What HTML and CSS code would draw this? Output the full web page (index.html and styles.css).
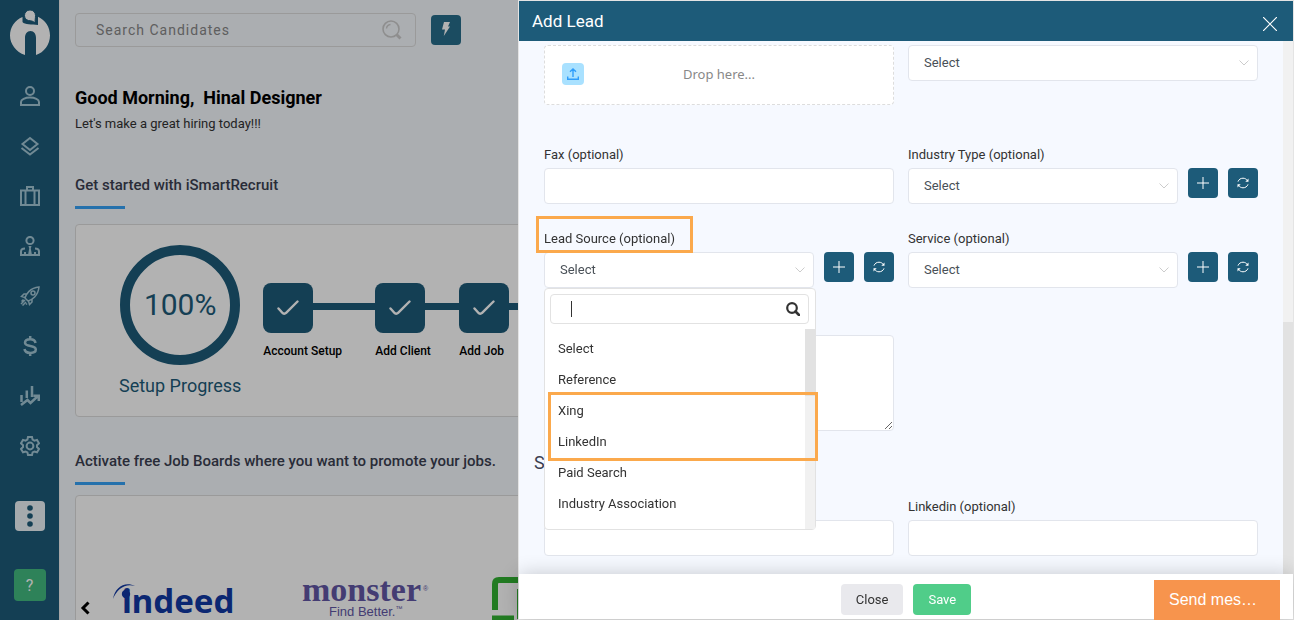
FILE: index.html
```html
<!DOCTYPE html>
<html lang="en">
<head>
  <meta charset="UTF-8">
  <title>Add Lead</title>
  <link rel="stylesheet" href="styles.css">
</head>
<body>
  <svg class="sprite" aria-hidden="true">
    <symbol id="plus" viewBox="0 0 12 12"><path d="M6 0v12M0 6h12" fill="none" stroke="currentColor"/></symbol>
    <symbol id="refresh" viewBox="0 0 12 12">
      <path d="M1 4.600C1.800 2.400 3.700 1.200 6 1.200c1.900 0 3.400.9 4.300 2.400M11 7.400c-.8 2.200-2.700 3.400-5 3.400-1.900 0-3.400-.9-4.300-2.400" fill="none" stroke="currentColor"/>
      <path d="M11.500 1.500v3.200H8.300zM.5 10.500V7.300h3.200z" fill="currentColor"/>
    </symbol>
    <symbol id="check" viewBox="0 0 22 16"><path d="M1.500 8.500l3.800 4.300c1 1.200 2.700 1.200 3.800.1L20.500 1.500" fill="none" stroke="currentColor" stroke-width="2.400" stroke-linecap="round"/></symbol>
  </svg>

  <div class="app">
    <nav class="sidebar">
      <a class="logo" href="#" aria-label="Home">
        <svg width="40" height="46" viewBox="0 0 40 46">
          <path d="M12.500 7C5 10 0 17 0 25.500 0 34 6 42 15 45V28c0-4 2-7 5.500-7s5.500 3 5.500 7v17c8-2.500 14-10.500 14-19.500C40 17 35.500 10 28 6.700V15c-6-1-13.500 0-15.500-3z" fill="#fff"/>
          <path d="M20 0c3.400 0 5.500 2.500 5.500 5.500 0 2.500-.5 4.500-.5 7.500-2-2.500-4.500-2-6.500-2.500-2.500-.6-4-2.500-4-5C14.500 2.500 16.600 0 20 0z" fill="#fff" stroke="#1d5b79"/>
        </svg>
      </a>
      <a href="#" aria-label="Candidates"><svg width="20" height="20" viewBox="0 0 20 20"><circle cx="10" cy="5" r="4" /><path d="M1 19v-3c0-2.500 4-4.500 9-4.500s9 2 9 4.500v3z"/></svg></a>
      <a href="#" aria-label="Jobs"><svg width="20" height="20" viewBox="0 0 20 20"><path d="M10 2l7.500 6L10 14 2.500 8zM1.500 12l8.500 6.500 8.500-6.500"/></svg></a>
      <a href="#" aria-label="Clients"><svg width="20" height="20" viewBox="0 0 20 20"><path d="M1 4.500h18V19H1zM7 4V1h6v3M5.500 5v14M14.500 5v14"/></svg></a>
      <a href="#" aria-label="Leads"><svg width="20" height="20" viewBox="0 0 20 20"><circle cx="10" cy="4.500" r="3.600"/><path d="M5 12.500c-3 0-4 1-4 3V19h18v-3.500c0-2-1-3-4-3M5 16v3M15 16v3"/><path d="M8.500 10h3l-.7 2.500 1 5.500H8.200l1-5.500z" class="solid"/></svg></a>
      <a href="#" aria-label="Campaigns"><svg width="20" height="20" viewBox="0 0 20 20"><path class="thin" d="M6.500 13.500L5 12c1-4 5-10 14-11-1 9-7 13-11 14zM7.500 8H4L1.500 10.500 5 11.500M12 12.500V16l-2.500 2.500-1-3.500M5 14l-4 4M3.500 13.500l-2 2M6 16l-3.500 3.500M7 17.500l-1 1"/><circle class="thin" cx="13" cy="7" r="2"/></svg></a>
      <a href="#" aria-label="Billing"><svg width="20" height="20" viewBox="0 0 20 20"><path class="thick" d="M15.500 7c-.3-2.400-2.300-3.700-5.200-3.700-3.200 0-5.300 1.300-5.300 3.500 0 2.300 2 2.700 5.300 3.200 3.500.5 5.500 1.300 5.500 3.500 0 2.100-2.200 3.400-5.500 3.400s-5.500-1.300-5.800-3.900M10.200 0v3M10.200 17v3"/></svg></a>
      <a href="#" aria-label="Reports"><svg width="20" height="20" viewBox="0 0 20 20"><path class="thick" d="M1.500 9v7M6.800 4.500v7.500M12 0v11M1 19l6.500-5 3 3L18 10M13.500 9.800h5.300V15"/></svg></a>
      <a href="#" aria-label="Settings"><svg width="20" height="20" viewBox="0 0 20 20"><path d="M8 1h4l.6 2.700 1.800 1 2.600-.8 2 3.400-2 1.900v1.800l2 1.900-2 3.400-2.600-.8-1.800 1L12 19H8l-.6-2.500-1.800-1-2.600.8-2-3.400L3 11V9.200L1 7.300l2-3.400 2.600.8 1.800-1z"/><circle cx="10" cy="10" r="3.400"/></svg></a>
      <button class="more" aria-label="More"><svg width="6" height="22" viewBox="0 0 6 22"><circle cx="3" cy="3" r="2.800"/><circle cx="3" cy="11" r="2.800"/><circle cx="3" cy="19" r="2.800"/></svg></button>
      <button class="help">?</button>
    </nav>

    <main class="main">
      <div class="topbar">
        <div class="search">
          <input type="text" placeholder="Search Candidates" aria-label="Search Candidates">
          <svg width="20" height="20" viewBox="0 0 20 20" fill="none" stroke="#ccc"><circle cx="9" cy="9" r="8" stroke-width="1.600"/><path d="M4.500 8.500A4.500 4.500 0 0 1 8.500 4.500" stroke-width="1.400"/><path d="M14.500 14.500l4 4" stroke-width="3"/></svg>
        </div>
        <button class="quick" aria-label="Quick actions"><svg width="8" height="14" viewBox="0 0 8 14"><path d="M2 0h6L6 4.500h2L1.800 14 3 7.500H0z" fill="#fff"/></svg></button>
      </div>

      <h1>Good Morning,&nbsp; Hinal Designer</h1>
      <p class="tagline">Let's make a great hiring today!!!</p>

      <h2>Get started with iSmartRecruit</h2>
      <section class="card setup">
        <div class="progress">
          <div class="ring">100%</div>
          <div>Setup Progress</div>
        </div>
        <ol class="steps">
          <li class="first"><div class="node"><span><svg width="22" height="16"><use href="#check"/></svg></span></div>Account Setup</li>
          <li><div class="node"><span><svg width="22" height="16"><use href="#check"/></svg></span></div>Add Client</li>
          <li><div class="node"><span><svg width="22" height="16"><use href="#check"/></svg></span></div>Add Job</li>
        </ol>
      </section>

      <h2>Activate free Job Boards where you want to promote your jobs.</h2>
      <section class="card boards">
        <button class="prev" aria-label="Previous"><svg width="10" height="14" viewBox="0 0 10 14"><path d="M8.500 1.500L3 7l5.500 5.500" fill="none" stroke="#000" stroke-width="3"/></svg></button>
        <svg width="128" height="60" viewBox="0 0 128 60" fill="#1039a4">
          <text x="9" y="36" class="indeed">indeed</text>
          <circle cx="13" cy="17" r="4.200"/>
          <path d="M0 22C2 10 12 4 22 9 12 6 4 12 0 22z"/>
        </svg>
        <svg width="131" height="60" viewBox="0 0 131 60" fill="#6257a5">
          <text x="1" y="24" class="monster">monster<tspan class="mark" dx="2" dy="-10">®</tspan></text>
          <text x="28" y="39" class="slogan">Find Better.<tspan class="mark" dy="-5">™</tspan></text>
        </svg>
        <svg width="60" height="60" viewBox="0 0 60 60" fill="none" stroke="#32b032" stroke-width="6"><path d="M3 33V7q0-4 4-4h50M0 41.500h22M28 12v30"/></svg>
      </section>
    </main>
  </div>

  <div class="backdrop"></div>

  <aside class="drawer">
    <header class="drawer-header">
      <span>Add Lead</span>
      <button aria-label="Close panel"><svg width="14" height="14" viewBox="0 0 14 14"><path d="M0 0l14 14M14 0L0 14" stroke="#fff" stroke-width="1.200"/></svg></button>
    </header>

    <div class="drawer-body">
      <form class="form">
        <div class="row">
          <button type="button" class="dropzone">
            <span class="upload"><svg width="12" height="12" viewBox="0 0 12 12" fill="none" stroke="#2e9dfb" stroke-width="1.400"><path d="M6 9V1M3 3.800L6 1l3 2.800M.7 8.500v2.800h10.600V8.500"/></svg></span>
            <span>Drop here...</span>
          </button>
          <select aria-label="Owner"><option>Select</option></select>
        </div>

        <div class="row after-drop">
          <div class="field">
            <label for="fax">Fax (optional)</label>
            <input id="fax" type="text">
          </div>
          <div class="field">
            <label for="industry">Industry Type (optional)</label>
            <div class="picker">
              <select id="industry"><option>Select</option></select>
              <button type="button" aria-label="Add industry"><svg width="12" height="12"><use href="#plus"/></svg></button>
              <button type="button" aria-label="Refresh industries"><svg width="12" height="12"><use href="#refresh"/></svg></button>
            </div>
          </div>
        </div>

        <div class="row">
          <div class="field lead-source">
            <label for="source" class="marked">Lead Source (optional)</label>
            <div class="picker">
              <select id="source"><option>Select</option></select>
              <button type="button" aria-label="Add source"><svg width="12" height="12"><use href="#plus"/></svg></button>
              <button type="button" aria-label="Refresh sources"><svg width="12" height="12"><use href="#refresh"/></svg></button>
            </div>
            <div class="menu">
              <div class="menu-search">
                <span class="caret"></span>
                <input type="text" aria-label="Filter sources">
                <svg width="14" height="14" viewBox="0 0 14 14" fill="none" stroke="#333"><circle cx="6" cy="6" r="4.800" stroke-width="2.200"/><path d="M9.500 9.500l3.500 3.500" stroke-width="2.600" stroke-linecap="round"/></svg>
              </div>
              <div class="menu-list">
                <ul role="listbox" aria-label="Lead Source">
                  <li role="option">Select</li>
                  <li role="option">Reference</li>
                  <li role="option">Xing</li>
                  <li role="option">LinkedIn</li>
                  <li role="option">Paid Search</li>
                  <li role="option">Industry Association</li>
                </ul>
                <div class="scrollbar"><div class="menu-thumb"></div></div>
              </div>
              <div class="menu-marker"></div>
            </div>
          </div>
          <div class="field">
            <label for="service">Service (optional)</label>
            <div class="picker">
              <select id="service"><option>Select</option></select>
              <button type="button" aria-label="Add service"><svg width="12" height="12"><use href="#plus"/></svg></button>
              <button type="button" aria-label="Refresh services"><svg width="12" height="12"><use href="#refresh"/></svg></button>
            </div>
          </div>
        </div>

        <div class="row notes">
          <textarea aria-label="Notes"></textarea>
        </div>

        <h3>Social</h3>
        <div class="row">
          <input type="text" aria-label="Skype">
          <div class="field">
            <label for="linkedin">Linkedin (optional)</label>
            <input id="linkedin" type="text">
          </div>
        </div>
      </form>
      <div class="scrollbar"><div class="body-thumb"></div></div>
    </div>

    <footer class="drawer-footer">
      <button class="btn-close">Close</button>
      <button class="btn-save">Save</button>
    </footer>
  </aside>

  <button class="chat">Send message</button>
</body>
</html>
```
FILE: styles.css
```css
* {
  box-sizing: border-box;
}
body {
  margin: 0;
  height: 100vh;
  overflow: hidden;
  font-family: Roboto, sans-serif;
  font-size: 13px;
  color: #333;
}
button, input, select, textarea {
  font: inherit;
  color: inherit;
}
button {
  border: 0;
  padding: 0;
  cursor: pointer;
}
ul, ol {
  list-style: none;
  margin: 0;
  padding: 0;
}
.sprite {
  display: none;
}

/* page behind the drawer */
.app {
  display: flex;
  height: 100vh;
  overflow: hidden;
}
.sidebar {
  flex: none;
  width: 60px;
  padding-top: 10px;
  display: flex;
  flex-direction: column;
  align-items: center;
  background: #1d5b79;
  border-right: 1px solid #eee;
}
.sidebar a {
  height: 20px;
  margin-bottom: 30px;
}
.sidebar .logo {
  height: 46px;
}
.sidebar a:not(.logo) svg {
  fill: none;
  stroke: #a3c6d5;
  stroke-width: 2;
}
.sidebar svg .thin {
  stroke-width: 1.5;
}
.sidebar svg .thick {
  stroke-width: 2.5;
}
.sidebar svg .solid {
  fill: #a3c6d5;
  stroke: none;
}
.more {
  width: 30px;
  height: 30px;
  margin-top: 15px;
  border-radius: 4px;
  background: #edf4f8;
}
.more svg {
  display: block;
  margin: auto;
  fill: #1d5b79;
}
.help {
  width: 32px;
  height: 32px;
  margin-top: 38px;
  border-radius: 4px;
  background: #43bb80;
  color: #fff;
  font-size: 16px;
}
.main {
  flex: 1;
  padding: 13px 15px 0;
  background: #f5f9fe;
}
.topbar {
  display: flex;
  align-items: center;
  gap: 15px;
  margin-bottom: 39px;
}
.search {
  display: flex;
  align-items: center;
  width: 341px;
  height: 34px;
  padding: 0 13px 0 20px;
  border: 1px solid #ddd;
  border-radius: 4px;
}
.search input {
  flex: 1;
  border: 0;
  padding: 0;
  background: none;
  font-size: 14px;
  letter-spacing: 1px;
}
.search input::placeholder {
  color: #888;
}
.quick {
  width: 30px;
  height: 30px;
  border-radius: 4px;
  background: #286e8b;
}
h1 {
  margin: 0 0 6px;
  font-size: 18px;
  line-height: 24px;
  font-weight: 700;
  color: #000;
}
.tagline {
  margin: 0 0 43px;
  line-height: 16px;
}
h2 {
  margin: 0 0 10px;
  font-size: 15px;
  line-height: 20px;
  font-weight: 500;
  color: #3b3f51;
}
h2::after {
  content: "";
  display: block;
  width: 50px;
  height: 3px;
  margin-top: 11px;
  background: #36a3f7;
}
.card {
  display: flex;
  width: 1180px;
  background: #fff;
  border: 1px solid #ddd;
  border-radius: 4px;
}
.setup {
  height: 193px;
  padding: 20px 43px;
  margin: 15px 0 34px;
}
.progress {
  flex: none;
  text-align: center;
  font-size: 18px;
  line-height: 24px;
  color: #1d5b79;
}
.ring {
  width: 120px;
  height: 120px;
  margin: 0 auto 9px;
  border: 10px solid #1d5b79;
  border-radius: 50%;
  font-size: 30px;
  line-height: 100px;
}
.steps {
  display: flex;
  padding: 38px 0 0 22px;
  font-size: 12px;
  line-height: 16px;
  font-weight: 500;
  color: #000;
  white-space: nowrap;
}
.steps li {
  width: 84px;
}
.steps .first {
  width: 112px;
}
.node {
  display: flex;
  align-items: center;
  margin-bottom: 10px;
}
.node::after {
  content: "";
  flex: 1;
  height: 7px;
  margin-top: -4px;
  background: #1d5b79;
}
.node span {
  display: flex;
  align-items: center;
  justify-content: center;
  width: 50px;
  height: 50px;
  border-radius: 8px;
  background: #1d5b79;
  color: #fff;
}
.boards {
  padding: 81px 0 0 4px;
  gap: 60px;
  height: 200px;
  align-items: flex-start;
}
.boards > svg {
  flex: none;
}
.prev {
  width: 10px;
  margin: 24px -37px 0 0;
  background: none;
}
.indeed {
  font: 700 33px "Noto Sans", sans-serif;
}
.monster {
  font: 700 34px "Liberation Serif", serif;
}
.slogan {
  font: 13px "Liberation Sans", sans-serif;
}
.mark {
  font: 7px "Liberation Sans", sans-serif;
}

.backdrop {
  position: fixed;
  inset: 0;
  background: rgba(0, 0, 0, 0.3);
}

/* drawer */
.drawer {
  position: fixed;
  top: 0;
  right: 0;
  bottom: 0;
  width: 60%;
  width: round(60vw, 1px);
  display: flex;
  flex-direction: column;
  border: 1px solid #e4e4e4;
  background: #f6f9ff;
}
.drawer-header {
  flex: none;
  display: flex;
  align-items: center;
  justify-content: space-between;
  height: 40px;
  padding: 0 16px 0 13px;
  background: #1d5b79;
  color: #fff;
  font-size: 17px;
}
.drawer-header button {
  background: none;
  height: 14px;
  margin-top: 6px;
}
.drawer-header svg {
  display: block;
}
.drawer-body {
  flex: 1;
  display: flex;
  min-height: 0;
}
.form {
  flex: 1;
  padding: 4px 25px 0;
}
.scrollbar {
  flex: none;
  width: 10px;
  background: #f1f1f1;
}
.body-thumb {
  height: 48%;
  margin-top: 281px;
  background: #e2e2e2;
}
.row {
  display: grid;
  grid-template-columns: 1fr 1fr;
  align-items: start;
  gap: 14px;
  margin-bottom: 27px;
}
.row:last-child {
  align-items: end;
}
.after-drop {
  margin-top: 42px;
}
.notes {
  margin-top: 47px;
}
.field {
  display: flex;
  flex-direction: column;
}
.field label {
  align-self: flex-start;
  line-height: 16px;
  margin-bottom: 5px;
}
.form input, .form select, .form textarea {
  width: 100%;
  height: 36px;
  padding: 0 15px;
  border: 1px solid #e2e5ec;
  border-radius: 4px;
  background: #fff;
}
.form select {
  appearance: none;
  padding-bottom: 2px;
  color: #495057;
  background: #fff url("data:image/svg+xml,%3Csvg xmlns='http://www.w3.org/2000/svg' width='10' height='6'%3E%3Cpath d='M.5.500 5 5 9.500.500' fill='none' stroke='%23ccc'/%3E%3C/svg%3E") no-repeat right 8px center;
}
.form textarea {
  display: block;
  height: 96px;
}
.dropzone {
  display: grid;
  grid-template-columns: 1fr auto 1fr;
  align-items: center;
  height: 60px;
  padding: 0 17px 3px;
  border: 1px dashed #ddd;
  border-radius: 4px;
  background: #fff;
  color: #888;
  font-family: "Noto Sans", sans-serif;
}
.upload {
  display: flex;
  align-items: center;
  justify-content: center;
  width: 22px;
  height: 22px;
  border-radius: 4px;
  background: #a9e1ff;
}
.picker {
  display: flex;
  align-items: flex-start;
  gap: 10px;
}
.picker select {
  flex: 1;
}
.picker button {
  display: flex;
  align-items: center;
  justify-content: center;
  width: 30px;
  height: 30px;
  border-radius: 4px;
  background: #1d5b79;
  color: #fff;
}
.form h3 {
  margin: -7px 0 24px -10px;
  font-size: 18px;
  line-height: 24px;
  font-weight: 400;
  color: #3b3f51;
}

/* open lead source menu */
.lead-source, .marked {
  position: relative;
}
.marked::after {
  content: "";
  position: absolute;
  inset: -15px -18px -6px -8px;
  border: 3px solid #fba94c;
  z-index: 3;
}
.menu {
  position: absolute;
  top: 100%;
  left: 0;
  right: 78px;
  z-index: 2;
  padding-top: 5px;
  border: 1px solid #e2e2e2;
  border-radius: 4px;
  background: #fff;
}
.menu-search {
  display: flex;
  align-items: center;
  height: 30px;
  margin: 0 6px 5px 5px;
  padding: 0 8px 0 20px;
  border: 1px solid #e2e2e2;
  border-radius: 4px;
}
.caret {
  width: 1px;
  height: 16px;
  background: #333;
}
.form .menu-search input {
  flex: 1;
  min-width: 0;
  height: 26px;
  padding: 0;
  border: 0;
}
.menu-list {
  display: flex;
  height: 200px;
}
.menu-list ul {
  flex: 1;
  padding: 4px 13px;
}
.menu-list li {
  line-height: 31px;
}
.menu-thumb {
  height: 67px;
  background: #e2e2e2;
}
.menu-marker {
  position: absolute;
  top: 103px;
  left: 3px;
  right: -3px;
  height: 69px;
  border: 3px solid #fba94c;
}

.drawer-footer {
  flex: none;
  display: flex;
  justify-content: center;
  gap: 10px;
  height: 45px;
  padding-top: 10px;
  background: #fff;
  box-shadow: 0 0 20px rgba(0, 0, 0, 0.2);
}
.drawer-footer button {
  height: 31px;
  padding: 0 15px;
  border-radius: 4px;
}
.btn-close {
  background: #e9e9ed;
}
.drawer-footer .btn-save {
  background: #50cd89;
  color: #fff;
}
.chat {
  position: fixed;
  right: 14px;
  bottom: 0;
  width: 126px;
  height: 40px;
  padding: 0 15px;
  overflow: hidden;
  text-overflow: ellipsis;
  white-space: nowrap;
  background: #f7944d;
  color: #fff;
  font: 16px "Liberation Sans", Arial, sans-serif;
}
```
